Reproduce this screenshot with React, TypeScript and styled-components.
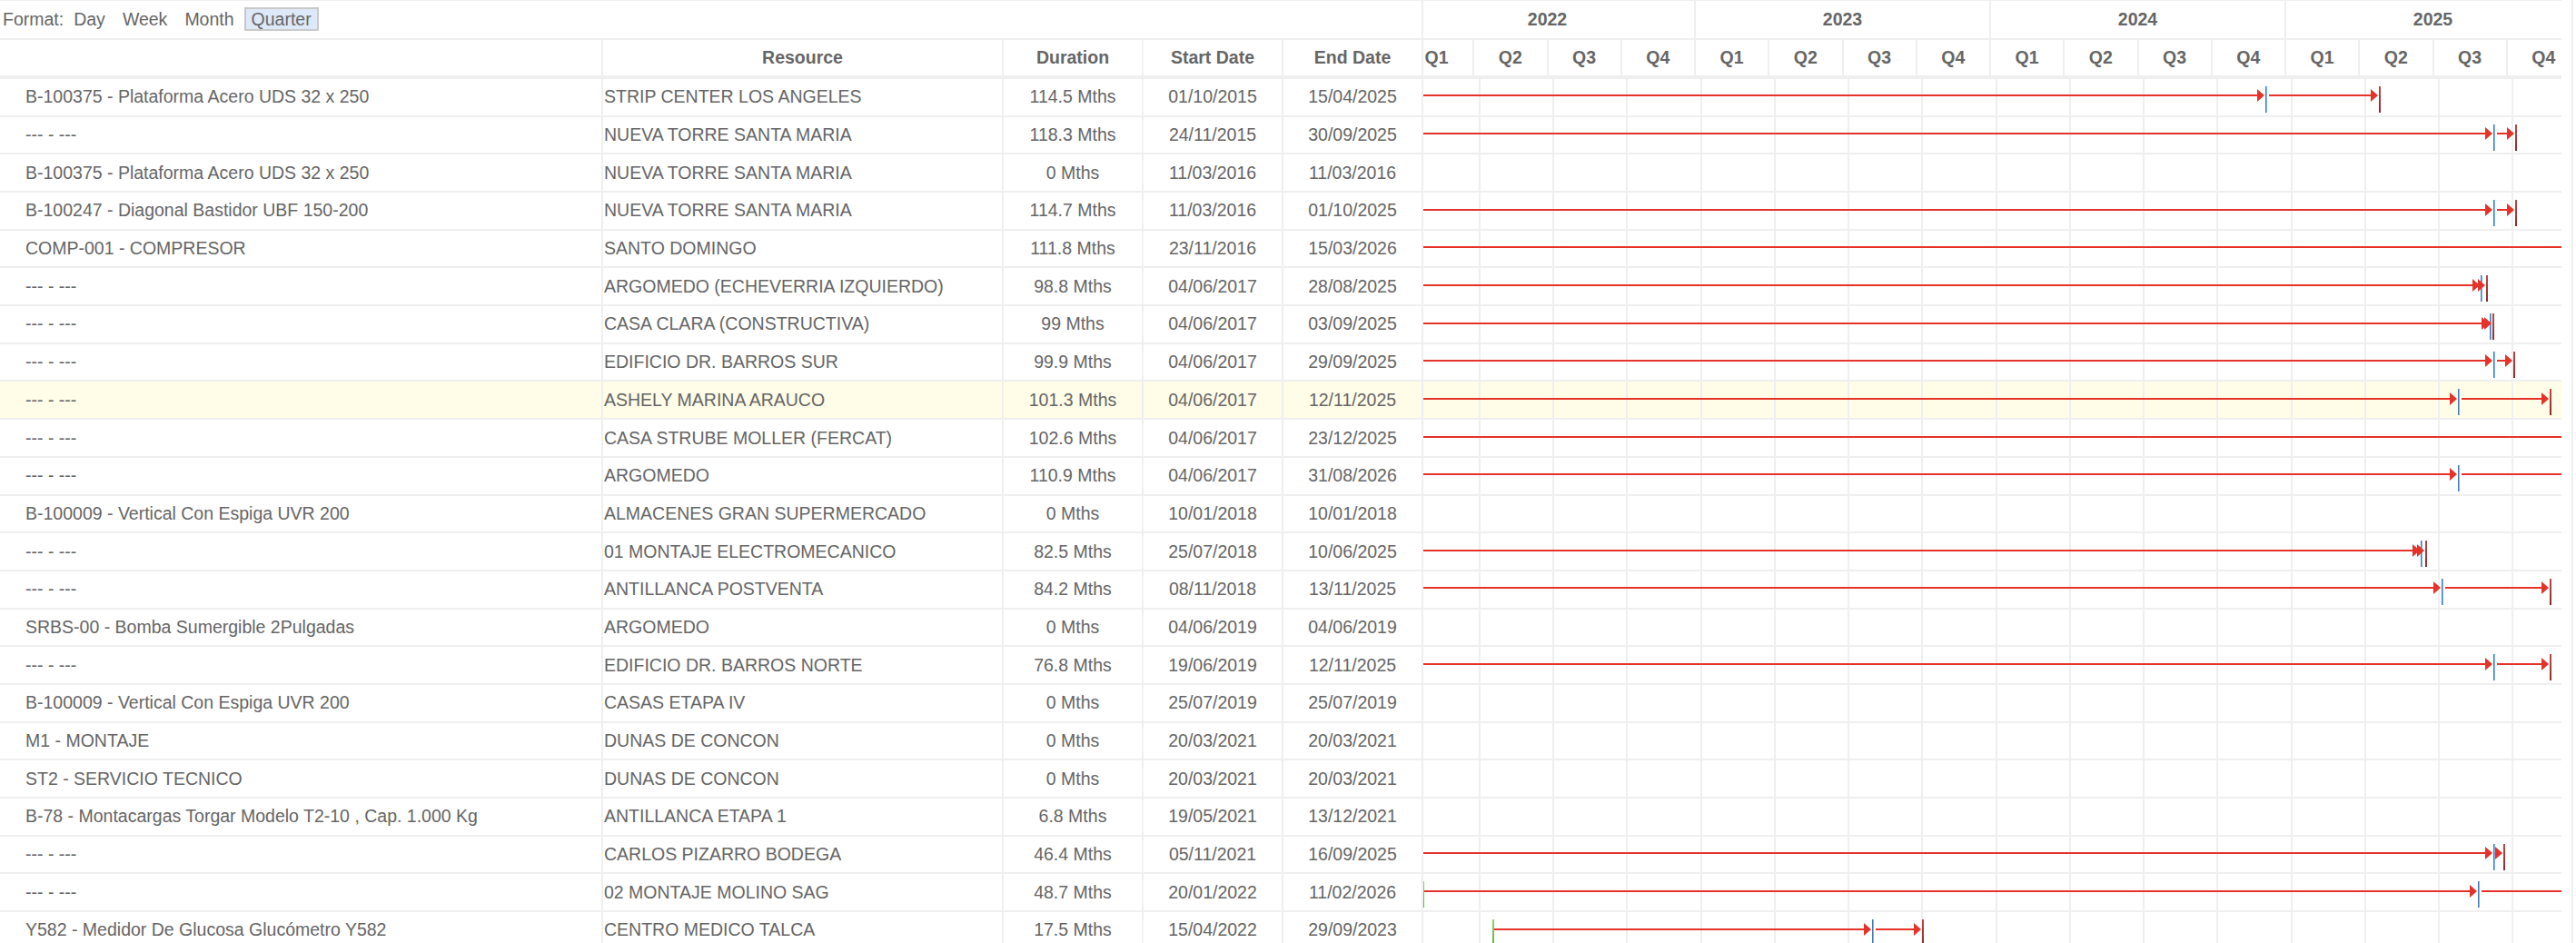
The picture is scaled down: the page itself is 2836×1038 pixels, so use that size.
import React from "react";
import styled, { createGlobalStyle } from "styled-components";

const LINE = "#efefef";
const RED = "#e5332a";
const Q = 81.25;
const GANTT_LEFT = 1567;
const GANTT_RIGHT = 2820;

const GlobalStyle = createGlobalStyle`
  html, body { margin: 0; padding: 0; background: #fff; }
  body {
    font-family: "Liberation Sans", Arial, sans-serif;
    font-size: 19.5px;
    color: #666;
  }
  * { box-sizing: border-box; }
`;

type Bar = { start?: number; mid?: number; end?: number };
type Task = {
  name: string;
  resource: string;
  duration: string;
  start: string;
  end: string;
  bar?: Bar;
  highlight?: boolean;
};

const tasks: Task[] = [
  { name: "B-100375 - Plataforma Acero UDS 32 x 250", resource: "STRIP CENTER LOS ANGELES", duration: "114.5 Mths", start: "01/10/2015", end: "15/04/2025", bar: { mid: 2494, end: 2619 } },
  { name: "--- - ---", resource: "NUEVA TORRE SANTA MARIA", duration: "118.3 Mths", start: "24/11/2015", end: "30/09/2025", bar: { mid: 2745, end: 2769 } },
  { name: "B-100375 - Plataforma Acero UDS 32 x 250", resource: "NUEVA TORRE SANTA MARIA", duration: "0 Mths", start: "11/03/2016", end: "11/03/2016" },
  { name: "B-100247 - Diagonal Bastidor UBF 150-200", resource: "NUEVA TORRE SANTA MARIA", duration: "114.7 Mths", start: "11/03/2016", end: "01/10/2025", bar: { mid: 2745, end: 2769 } },
  { name: "COMP-001 - COMPRESOR", resource: "SANTO DOMINGO", duration: "111.8 Mths", start: "23/11/2016", end: "15/03/2026", bar: {} },
  { name: "--- - ---", resource: "ARGOMEDO (ECHEVERRIA IZQUIERDO)", duration: "98.8 Mths", start: "04/06/2017", end: "28/08/2025", bar: { mid: 2731, end: 2737 } },
  { name: "--- - ---", resource: "CASA CLARA (CONSTRUCTIVA)", duration: "99 Mths", start: "04/06/2017", end: "03/09/2025", bar: { mid: 2741, end: 2744 } },
  { name: "--- - ---", resource: "EDIFICIO DR. BARROS SUR", duration: "99.9 Mths", start: "04/06/2017", end: "29/09/2025", bar: { mid: 2745, end: 2767 } },
  { name: "--- - ---", resource: "ASHELY MARINA ARAUCO", duration: "101.3 Mths", start: "04/06/2017", end: "12/11/2025", bar: { mid: 2706, end: 2807 }, highlight: true },
  { name: "--- - ---", resource: "CASA STRUBE MOLLER (FERCAT)", duration: "102.6 Mths", start: "04/06/2017", end: "23/12/2025", bar: {} },
  { name: "--- - ---", resource: "ARGOMEDO", duration: "110.9 Mths", start: "04/06/2017", end: "31/08/2026", bar: { mid: 2706 } },
  { name: "B-100009 - Vertical Con Espiga UVR 200", resource: "ALMACENES GRAN SUPERMERCADO", duration: "0 Mths", start: "10/01/2018", end: "10/01/2018" },
  { name: "--- - ---", resource: "01 MONTAJE ELECTROMECANICO", duration: "82.5 Mths", start: "25/07/2018", end: "10/06/2025", bar: { mid: 2665, end: 2670 } },
  { name: "--- - ---", resource: "ANTILLANCA POSTVENTA", duration: "84.2 Mths", start: "08/11/2018", end: "13/11/2025", bar: { mid: 2688, end: 2807 } },
  { name: "SRBS-00 - Bomba Sumergible 2Pulgadas", resource: "ARGOMEDO", duration: "0 Mths", start: "04/06/2019", end: "04/06/2019" },
  { name: "--- - ---", resource: "EDIFICIO DR. BARROS NORTE", duration: "76.8 Mths", start: "19/06/2019", end: "12/11/2025", bar: { mid: 2745, end: 2807 } },
  { name: "B-100009 - Vertical Con Espiga UVR 200", resource: "CASAS ETAPA IV", duration: "0 Mths", start: "25/07/2019", end: "25/07/2019" },
  { name: "M1 - MONTAJE", resource: "DUNAS DE CONCON", duration: "0 Mths", start: "20/03/2021", end: "20/03/2021" },
  { name: "ST2 - SERVICIO TECNICO", resource: "DUNAS DE CONCON", duration: "0 Mths", start: "20/03/2021", end: "20/03/2021" },
  { name: "B-78 - Montacargas Torgar Modelo T2-10 , Cap. 1.000 Kg", resource: "ANTILLANCA ETAPA 1", duration: "6.8 Mths", start: "19/05/2021", end: "13/12/2021" },
  { name: "--- - ---", resource: "CARLOS PIZARRO BODEGA", duration: "46.4 Mths", start: "05/11/2021", end: "16/09/2025", bar: { mid: 2745, end: 2756 } },
  { name: "--- - ---", resource: "02 MONTAJE MOLINO SAG", duration: "48.7 Mths", start: "20/01/2022", end: "11/02/2026", bar: { start: 1566, mid: 2728 } },
  { name: "Y582 - Medidor De Glucosa Glucómetro Y582", resource: "CENTRO MEDICO TALCA", duration: "17.5 Mths", start: "15/04/2022", end: "29/09/2023", bar: { start: 1643, mid: 2061, end: 2116 } },
];

const years = [2022, 2023, 2024, 2025];
const quarters = ["Q1", "Q2", "Q3", "Q4"];

const Frame = styled.div`
  width: 2833px;
  height: 1038px;
  overflow: hidden;
  border-right: 2px solid ${LINE};
`;

const Table = styled.div`
  width: 2820px;
  border-top: 1px solid ${LINE};
`;

const Row = styled.div<{ $h: number; $line: number; $highlight?: boolean }>`
  display: flex;
  height: ${(p) => p.$h}px;
  border-bottom: ${(p) => p.$line}px solid ${LINE};
  background: ${(p) => (p.$highlight ? "#fffce7" : "transparent")};
`;

const Toolbar = styled.div`
  flex: none;
  width: 1565px;
  display: flex;
  align-items: center;
  padding-left: 3px;
`;

const FormatLabel = styled.span`
  line-height: 22px;
`;

const FormatOption = styled.span<{ $active?: boolean }>`
  margin-left: 3px;
  padding: 0 6px;
  line-height: 22px;
  border: 2px solid ${(p) => (p.$active ? "#c9c9c9" : "transparent")};
  background: ${(p) => (p.$active ? "#dde8f8" : "transparent")};
`;

const Cell = styled.div<{ $w: number; $edge?: boolean; $center?: boolean; $pad?: number }>`
  flex: none;
  width: ${(p) => p.$w}px;
  display: flex;
  align-items: center;
  justify-content: ${(p) => (p.$center ? "center" : "flex-start")};
  padding-left: ${(p) => p.$pad ?? 0}px;
  border-left: ${(p) => (p.$edge ? `2px solid ${LINE}` : "none")};
  white-space: nowrap;
  overflow: hidden;
`;

const HeadCell = styled(Cell)`
  font-weight: bold;
`;

const GanttCell = styled.div`
  flex: none;
  position: relative;
  width: 1255px;
  border-left: 2px solid ${LINE};
  overflow: hidden;
`;

const Strip = styled.div<{ $shift: number }>`
  display: flex;
  height: 100%;
  margin-left: ${(p) => p.$shift}px;
`;

const YearCell = styled.div`
  flex: none;
  width: ${Q * 4}px;
  display: flex;
  align-items: center;
  justify-content: center;
  border-right: 2px solid ${LINE};
  font-weight: bold;
`;

const QuarterHead = styled.div`
  flex: none;
  width: ${Q}px;
  display: flex;
  align-items: center;
  justify-content: center;
  border-right: 2px solid ${LINE};
  font-weight: bold;
`;

const QuarterCell = styled.div`
  flex: none;
  width: ${Q}px;
  height: 100%;
  border-right: 2px solid ${LINE};
`;

const Segment = styled.div`
  position: absolute;
  top: 17.5px;
  height: 2px;
  background: ${RED};
`;

const Arrow = styled.div`
  position: absolute;
  top: 11.5px;
  width: 0;
  height: 0;
  border-top: 7px solid transparent;
  border-bottom: 7px solid transparent;
  border-left: 8px solid ${RED};
`;

const markerColors = {
  start: "linear-gradient(to bottom, #8bd665, #5cb33c)",
  mid: "linear-gradient(to right, #4677b8 50%, #7fb6e6 50%)",
  end: "linear-gradient(to bottom, #b84a45, #8c2b2b)",
};

const Marker = styled.div<{ $kind: "start" | "mid" | "end" }>`
  position: absolute;
  top: 8px;
  width: 2px;
  height: 29px;
  background: ${(p) => markerColors[p.$kind]};
`;

const at = (x: number) => x - GANTT_LEFT;

const GanttBar = ({ bar }: { bar: Bar }) => {
  const parts: React.ReactNode[] = [];
  let cursor = GANTT_LEFT;
  if (bar.start !== undefined) {
    parts.push(<Marker key="s" $kind="start" style={{ left: at(bar.start) }} />);
    cursor = bar.start + 2;
  }
  const runTo = (tip: number, key: string) => {
    parts.push(
      <Segment key={key + "l"} style={{ left: at(cursor), width: Math.max(0, tip - cursor - 2) }} />
    );
    parts.push(<Arrow key={key + "a"} style={{ left: at(tip - 8) }} />);
  };
  if (bar.mid !== undefined) {
    runTo(bar.mid - 1, "m");
    parts.push(<Marker key="mm" $kind="mid" style={{ left: at(bar.mid) }} />);
    cursor = bar.mid + 4;
  }
  if (bar.end !== undefined) {
    runTo(bar.end - 1, "e");
    parts.push(<Marker key="em" $kind="end" style={{ left: at(bar.end) }} />);
  } else {
    parts.push(
      <Segment key="tail" style={{ left: at(cursor), width: GANTT_RIGHT - cursor }} />
    );
  }
  return <>{parts}</>;
};

const BodyGrid = () => (
  <Strip $shift={-18.3}>
    {Array.from({ length: 16 }).map((_, i) => (
      <QuarterCell key={i} />
    ))}
  </Strip>
);

export default function App() {
  return (
    <>
      <GlobalStyle />
      <Frame>
        <Table>
          <Row $h={42.7} $line={2}>
            <Toolbar>
              <FormatLabel>Format:</FormatLabel>
              <FormatOption>Day</FormatOption>
              <FormatOption>Week</FormatOption>
              <FormatOption>Month</FormatOption>
              <FormatOption $active>Quarter</FormatOption>
            </Toolbar>
            <GanttCell>
              <Strip $shift={-25}>
                {years.map((y) => (
                  <YearCell key={y}>{y}</YearCell>
                ))}
              </Strip>
            </GanttCell>
          </Row>
          <Row $h={43.3} $line={4}>
            <HeadCell $w={662} />
            <HeadCell $w={441} $edge $center>Resource</HeadCell>
            <HeadCell $w={154} $edge $center>Duration</HeadCell>
            <HeadCell $w={154} $edge $center>Start Date</HeadCell>
            <HeadCell $w={154} $edge $center>End Date</HeadCell>
            <GanttCell>
              <Strip $shift={-25}>
                {years.map((y) =>
                  quarters.map((q) => <QuarterHead key={`${y}${q}`}>{q}</QuarterHead>)
                )}
              </Strip>
            </GanttCell>
          </Row>
          {tasks.map((t, i) => (
            <Row key={i} $h={41.7} $line={2} $highlight={t.highlight}>
              <Cell $w={662} $pad={28}>{t.name}</Cell>
              <Cell $w={441} $edge $pad={1}>{t.resource}</Cell>
              <Cell $w={154} $edge $center>{t.duration}</Cell>
              <Cell $w={154} $edge $center>{t.start}</Cell>
              <Cell $w={154} $edge $center>{t.end}</Cell>
              <GanttCell>
                <BodyGrid />
                {t.bar && <GanttBar bar={t.bar} />}
              </GanttCell>
            </Row>
          ))}
        </Table>
      </Frame>
    </>
  );
}
